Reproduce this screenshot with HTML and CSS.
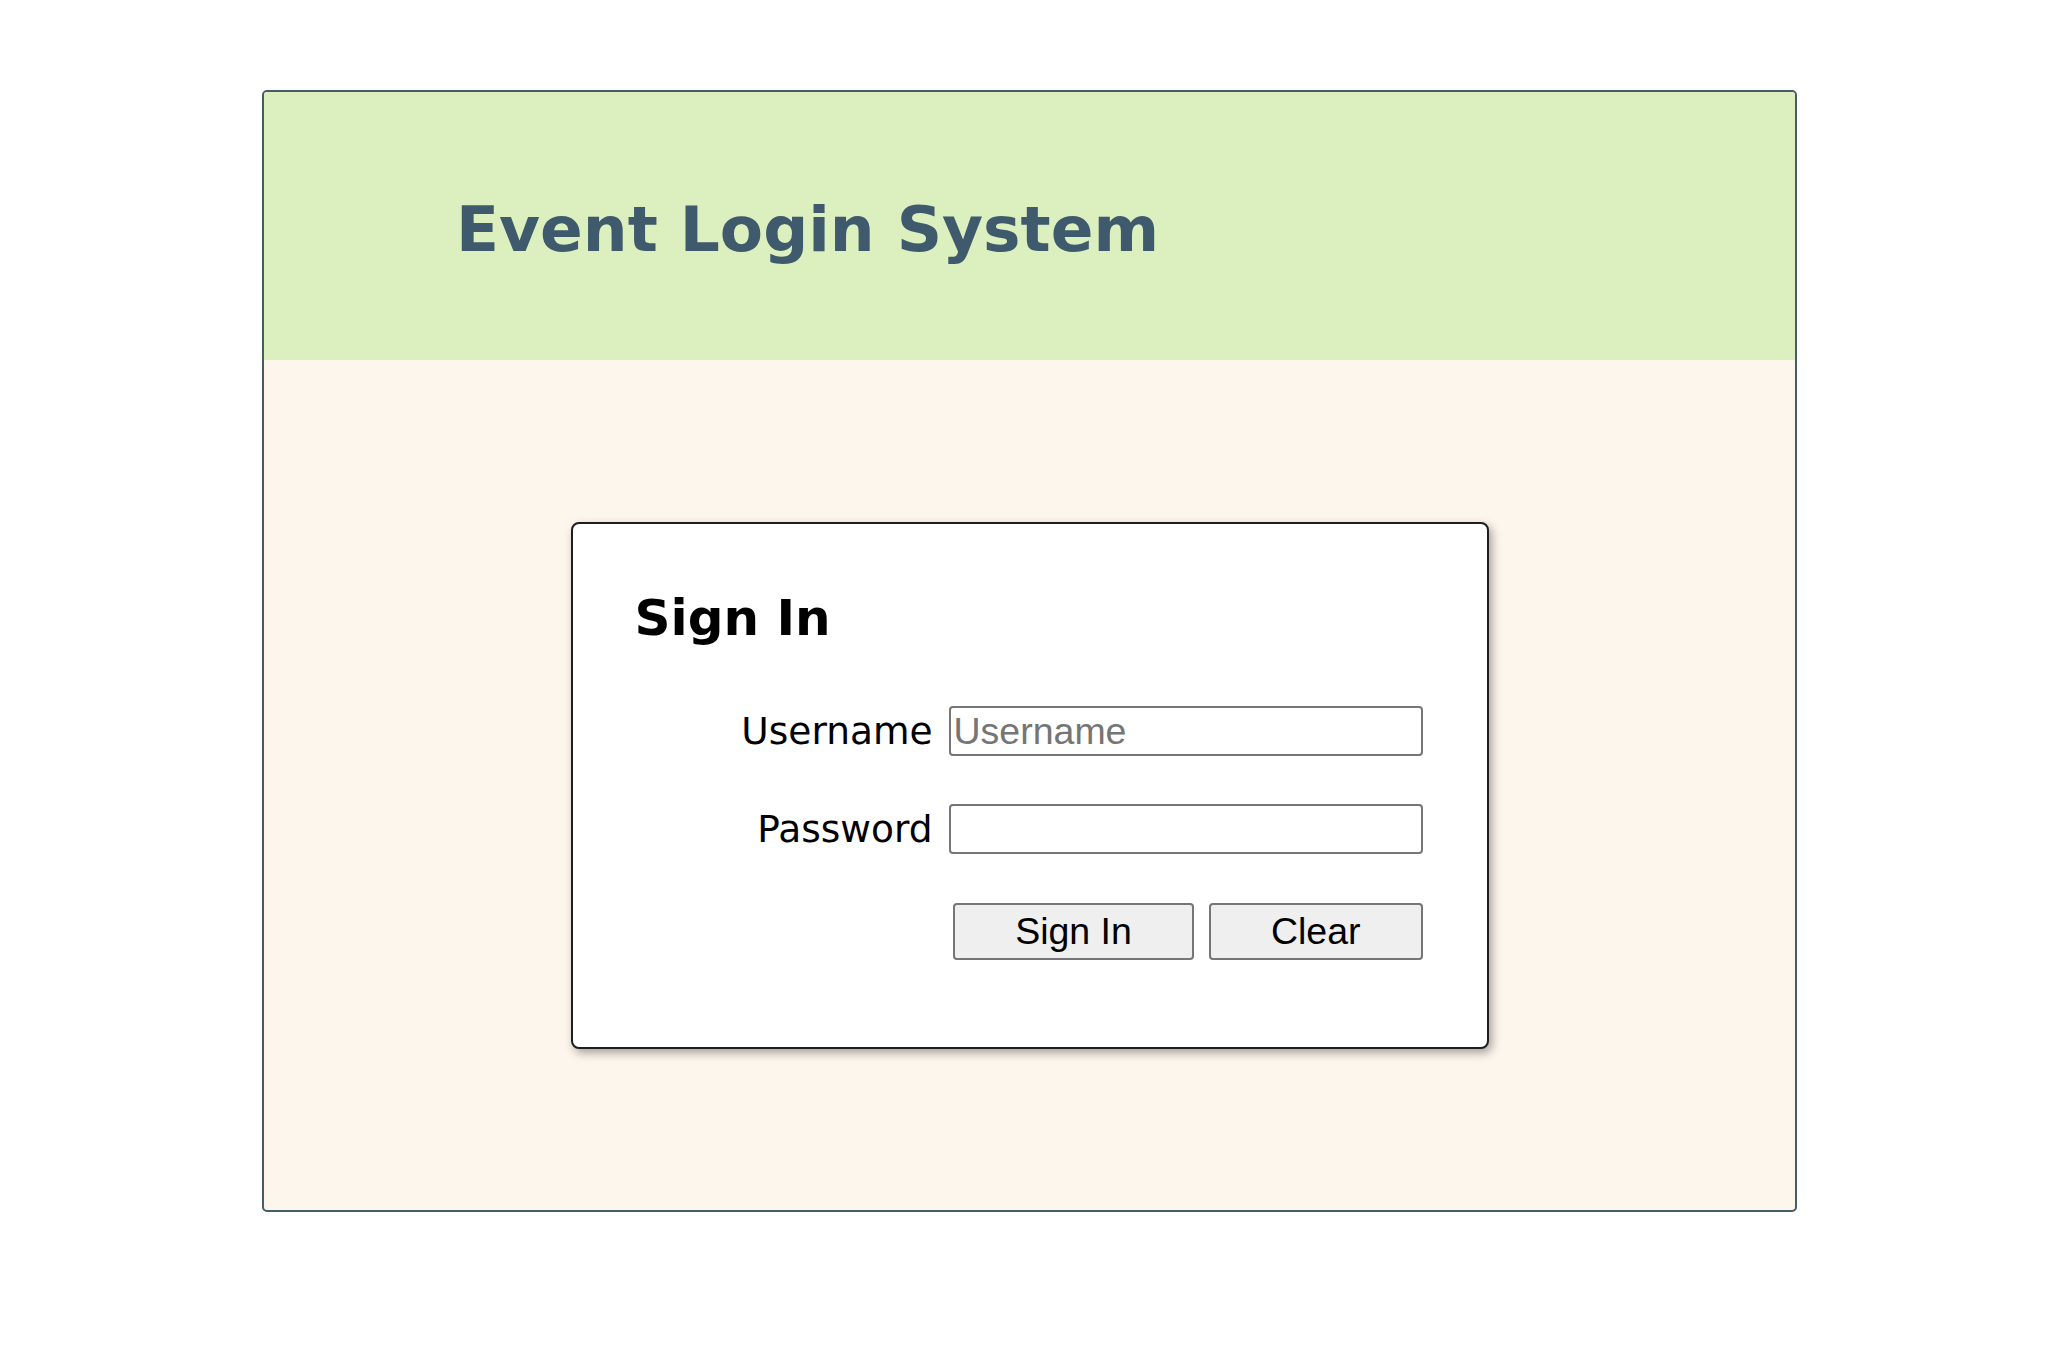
FILE: index.html
```html
<!DOCTYPE html>
<html lang="en">
<head>
<meta charset="utf-8">
<title>Event Login System</title>
<link rel="stylesheet" href="styles.css">
</head>
<body>
<div class="frame">
  <header class="masthead">
    <h1 class="site-title">Event Login System</h1>
  </header>
  <main class="stage">
    <section class="card">
      <h2 class="card-title">Sign In</h2>
      <form class="login-form">
        <label class="field-label" for="username">Username</label>
        <input class="field-input" id="username" type="text" placeholder="Username">
        <label class="field-label" for="password">Password</label>
        <input class="field-input" id="password" type="password">
        <div class="actions">
          <button class="btn" type="submit">Sign In</button>
          <button class="btn" type="reset">Clear</button>
        </div>
      </form>
    </section>
  </main>
</div>
</body>
</html>
```

FILE: styles.css
```css
* { box-sizing: border-box; }

html, body {
  margin: 0;
  padding: 0;
  background: #ffffff;
}

body {
  font-family: "DejaVu Sans", Verdana, sans-serif;
  color: #000;
}

.frame {
  width: 1535px;
  margin: 90px auto 0;
  border: 2px solid #455d66;
  border-radius: 5px;
  overflow: hidden;
  background: #fdf6ed;
}

.masthead {
  background: #dcefbf;
  height: 268px;
  padding: 101px 0 0 192px;
}

.site-title {
  margin: 0;
  font-family: "DejaVu Sans", Verdana, sans-serif;
  font-weight: bold;
  font-size: 63px;
  line-height: 74px;
  color: #3e5a6c;
}

.stage {
  display: flex;
  justify-content: center;
  padding: 162px 0 161px;
}

.card {
  width: 918px;
  background: #ffffff;
  border: 2px solid #1e1e1e;
  border-radius: 8px;
  box-shadow: 3px 4px 10px rgba(0, 0, 0, 0.35);
  padding: 66px 64px 87px 62px;
}

.card-title {
  margin: 0 0 59px;
  font-family: "DejaVu Sans", Verdana, sans-serif;
  font-weight: bold;
  font-size: 50px;
  line-height: 57px;
  color: #000;
}

.login-form {
  display: grid;
  grid-template-columns: 1fr 474px;
  column-gap: 16px;
  row-gap: 48px;
  align-items: center;
}

.field-label {
  justify-self: end;
  font-family: "DejaVu Sans", Verdana, sans-serif;
  font-size: 37.5px;
  line-height: 44px;
  color: #000;
}

.field-input {
  width: 474px;
  height: 50px;
  margin: 0;
  padding: 1px 3px;
  border: 2px solid #767676;
  border-radius: 4px;
  background: #fff;
  font-family: "Liberation Sans", Arial, sans-serif;
  font-size: 37.5px;
  color: #000;
}

.field-input::placeholder {
  color: #757575;
}

.actions {
  grid-column: 2;
  display: flex;
  justify-content: flex-end;
  gap: 15px;
  margin-top: 1px;
}

.btn {
  height: 57px;
  margin: 0;
  padding: 0 60px;
  border: 2px solid #767676;
  border-radius: 4px;
  background: #efefef;
  font-family: "Liberation Sans", Arial, sans-serif;
  font-size: 37.5px;
  color: #000;
}
```
